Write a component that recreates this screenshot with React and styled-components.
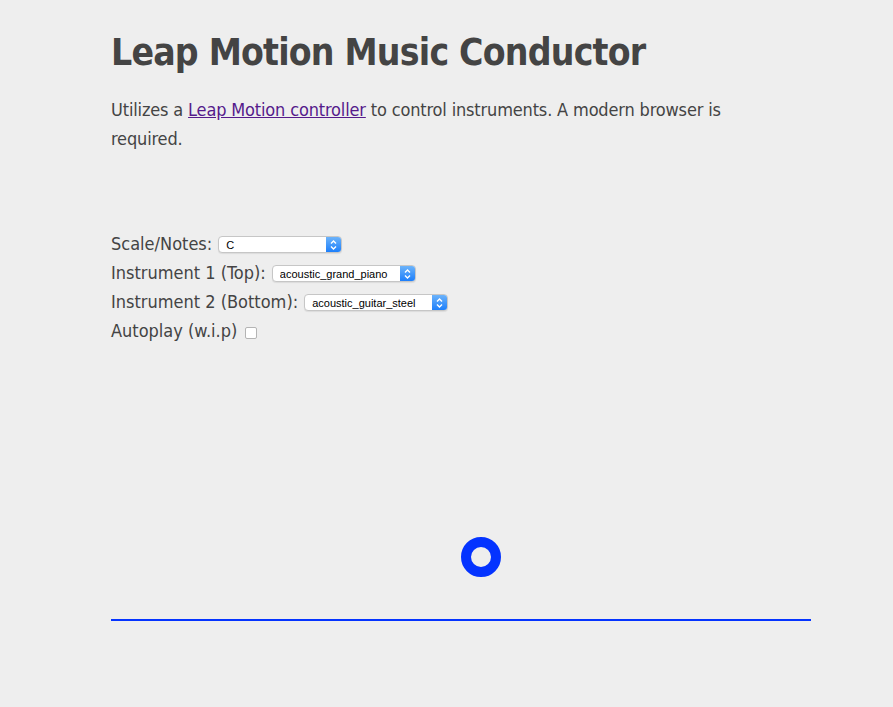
import React from "react"
import styled, { createGlobalStyle } from "styled-components"

const GlobalStyle = createGlobalStyle`
    body {
        margin: 0;
        background: #eeeeee;
        color: #444444;
        font-family: "DejaVu Sans Condensed", "DejaVu Sans", Tahoma, sans-serif;
    }
`

const Page = styled.div`
    padding: 29px 0 0 111px;
    width: 700px;
`

const Title = styled.h1`
    margin: 0;
    font-size: 37px;
    line-height: 48px;
    font-weight: bold;
    letter-spacing: -0.8px;
`

const Intro = styled.p`
    margin: 18px 0 0;
    max-width: 650px;
    font-size: 18px;
    line-height: 29px;
    letter-spacing: -0.16px;

    a { color: #551a8b; }
`

const Controls = styled.div`
    margin-top: 76px;
    display: flex;
    flex-direction: column;
`

const Row = styled.label`
    display: flex;
    align-items: center;
    height: 29px;
    font-size: 18px;
`

const SelectBox = styled.span`
    display: inline-flex;
    margin: 2px 0 0 6px;
    width: ${p => p.width}px;
    height: 17px;
    box-sizing: border-box;
    border: 1px solid #c6c6c6;
    border-radius: 4px;
    background: #ffffff;
    overflow: hidden;
    box-shadow: 0 1px 1px rgba(0,0,0,0.08);
`

const NativeSelect = styled.select`
    flex: 1;
    appearance: none;
    -webkit-appearance: none;
    border: none;
    background: transparent;
    padding: 0 0 0 7px;
    margin: 0;
    font-family: "Liberation Sans", Arial, sans-serif;
    font-size: 11px;
    color: #000;
    outline: none;
`

const ArrowCap = styled.span`
    width: 15px;
    display: flex;
    align-items: center;
    justify-content: center;
    background: linear-gradient(#6cb3fa, #1d7ffb);
`

const Check = styled.span`
    display: inline-block;
    margin: 5px 0 0 8px;
    width: 12px;
    height: 12px;
    box-sizing: border-box;
    border: 1px solid #b4b4b4;
    border-radius: 2px;
    background: #ffffff;
`

const Stage = styled.div`
    height: 274px;
    border-bottom: 2px solid #0433ff;
`

const Arrows = () => (
    <svg width="9" height="12" viewBox="0 0 9 12">
        <path d="M2 4.5 L4.5 2 L7 4.5 M2 7.5 L4.5 10 L7 7.5" fill="none" stroke="#fff" strokeWidth="1.4" />
    </svg>
)

const Picker = ({ width, options }) => (
    <SelectBox width={width}>
        <NativeSelect defaultValue={options[0]}>
            {options.map(o => <option key={o}>{o}</option>)}
        </NativeSelect>
        <ArrowCap><Arrows /></ArrowCap>
    </SelectBox>
)

export default function App() {
    return (
        <Page>
            <GlobalStyle />
            <Title>Leap Motion Music Conductor</Title>
            <Intro>
                Utilizes a <a href="#">Leap Motion controller</a> to control instruments. A modern browser is required.
            </Intro>
            <Controls>
                <Row>Scale/Notes: <Picker width={124} options={["C", "D", "E", "F", "G", "A", "B"]} /></Row>
                <Row>Instrument 1 (Top): <Picker width={144} options={["acoustic_grand_piano"]} /></Row>
                <Row>Instrument 2 (Bottom): <Picker width={144} options={["acoustic_guitar_steel"]} /></Row>
                <Row>Autoplay (w.i.p) <Check /></Row>
            </Controls>
            <Stage>
                <svg width="700" height="274">
                    <circle cx="370" cy="212" r="15" fill="none" stroke="#0433ff" strokeWidth="10" />
                </svg>
            </Stage>
        </Page>
    )
}
